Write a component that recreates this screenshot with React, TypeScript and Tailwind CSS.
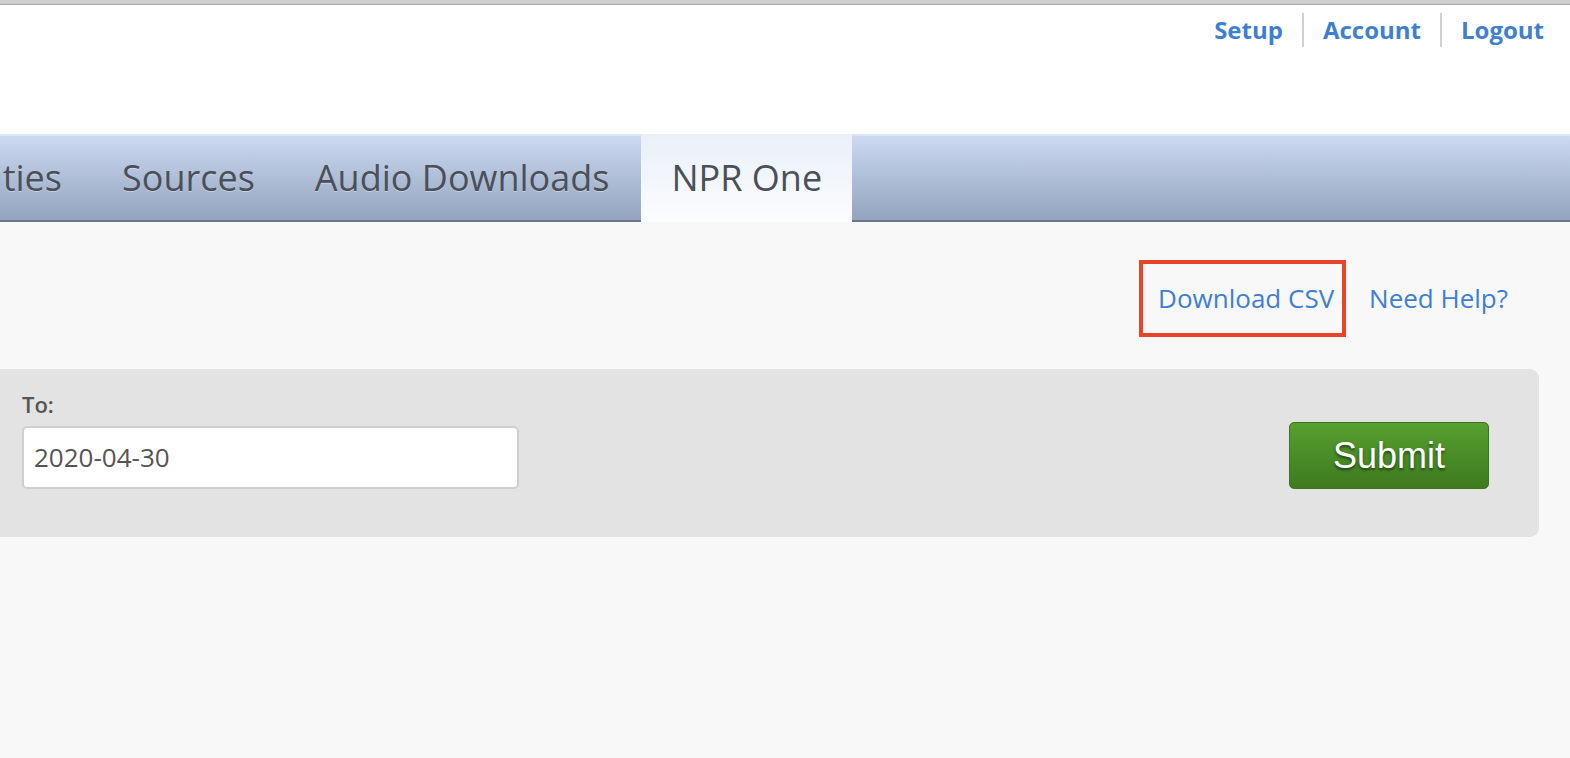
import React from "react";

export default function App() {
  return (
    <div className="w-full h-[758px] bg-[#f8f8f8] overflow-hidden font-['Open_Sans',sans-serif]">
      {/* top browser edge */}
      <div className="h-[5px] bg-[#cfcfcf] border-b-[1px] border-[#a3a3a3]" />
      {/* header */}
      <div className="h-[129px] bg-white flex justify-end items-start pr-[26px] pt-[8px]">
        <div className="flex items-center h-[34px] text-[24px] font-bold text-[#3f7fcf]">
          <a className="px-[19px] leading-none">Setup</a>
          <span className="w-[2px] h-[34px] bg-[#d0d0d0]" />
          <a className="px-[19px] leading-none">Account</a>
          <span className="w-[2px] h-[34px] bg-[#d0d0d0]" />
          <a className="pl-[19px] leading-none">Logout</a>
        </div>
      </div>
      {/* nav */}
      <div className="h-[88px] border-t-[2px] border-[#dde6f5] border-b-[2px] border-b-[#6b7689] bg-gradient-to-b from-[#cbd9f1] to-[#94a4be] flex items-stretch text-[36px] text-[#4b4f59] [text-shadow:0_1px_0_rgba(255,255,255,0.35)] whitespace-nowrap">
        <div className="w-[92px] flex items-center pr-[30px] justify-end overflow-hidden">
          <span className="shrink-0">Activities</span>
        </div>
        <div className="flex items-center px-[30px]">Sources</div>
        <div className="flex items-center pl-[30px] pr-[32px]">Audio Downloads</div>
        <div className="flex items-center px-[30px] -mt-[2px] -mb-[2px] bg-gradient-to-b from-[#eaf0fa] to-[#fbfcfe]">NPR One</div>
      </div>
      {/* links row */}
      <div className="flex justify-end items-center pr-[62px] pt-[38px] text-[26px] text-[#3f7fcf]">
        <div className="border-[4px] border-[#e8432b] h-[77px] w-[207px] flex items-center pl-[15px]">
          <a className="whitespace-nowrap">Download CSV</a>
        </div>
        <a className="ml-[23px]">Need Help?</a>
      </div>
      {/* form panel */}
      <div className="mt-[32px] mr-[31px] h-[168px] bg-[#e3e3e3] rounded-r-[9px] flex items-start justify-between pl-[22px] pr-[50px]">
        <div className="pt-[21px] flex flex-col">
          <label className="text-[22px] font-semibold text-[#555] leading-[28px]">To:</label>
          <div className="mt-[8px] w-[497px] h-[63px] bg-white border-[2px] border-[#cfcfcf] rounded-[5px] flex items-center pl-[10px] text-[26px] text-[#555]">
            2020-04-30
          </div>
        </div>
        <button className="mt-[53px] w-[200px] h-[67px] rounded-[5px] border border-[#3d7420] bg-gradient-to-b from-[#56a030] to-[#3f7a1f] text-white text-[36px] font-['Liberation_Sans',Arial,sans-serif] [text-shadow:0_2px_3px_rgba(0,0,0,0.55)]">
          Submit
        </button>
      </div>
    </div>
  );
}
